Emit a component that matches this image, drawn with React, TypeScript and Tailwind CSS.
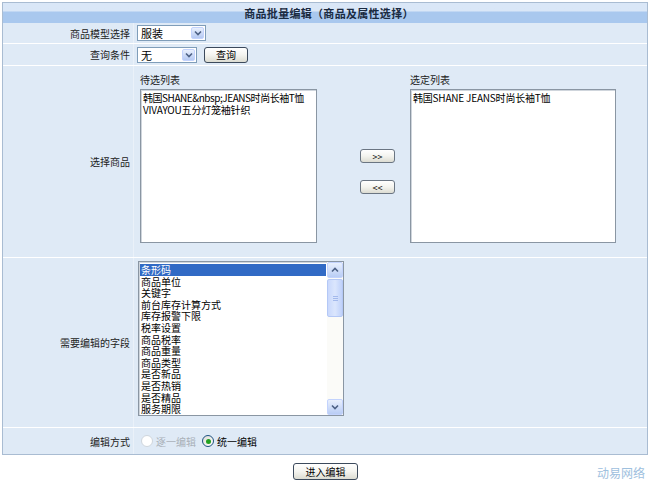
import React from "react";

const FONT = '"Noto Sans CJK SC", "Liberation Sans", sans-serif';

function Chevron({ up = false }: { up?: boolean }) {
  return (
    <svg width="8" height="6" viewBox="0 0 8 6" className={up ? "rotate-180" : ""}>
      <path d="M1 1.5 L4 4.5 L7 1.5" fill="none" stroke="#4d6185" strokeWidth="1.6" />
    </svg>
  );
}

function XpSelect({ value, width }: { value: string; width: string }) {
  return (
    <div className={`flex h-[16px] ${width} border border-[#7f9db9] bg-white`}>
      <span className="flex-1 pl-[3px] text-[11px] leading-[14px] text-black">{value}</span>
      <span className="m-[1px] flex w-[13px] items-center justify-center rounded-[2px] border border-[#c3d3fd] bg-gradient-to-b from-[#e9f0fd] to-[#b5c9f3]">
        <Chevron />
      </span>
    </div>
  );
}

function XpButton({ children, className }: { children: React.ReactNode; className: string }) {
  return (
    <button
      className={`flex items-center justify-center rounded-[3px] border border-[#3c4a5c] bg-gradient-to-b from-white via-[#f4f4ef] to-[#dcdcd2] text-black leading-none ${className}`}
    >
      {children}
    </button>
  );
}

function Row({
  label,
  className,
  labelClass = "items-center",
  children,
}: {
  label: string;
  className: string;
  labelClass?: string;
  children: React.ReactNode;
}) {
  return (
    <div className={`grid grid-cols-[131px_1fr] border-b border-white ${className}`}>
      <div className={`flex justify-end border-r border-[#eaf1f9] pr-[3px] ${labelClass}`}>
        <span>{label}</span>
      </div>
      <div className="flex">{children}</div>
    </div>
  );
}

const FIELDS = [
  "条形码",
  "商品单位",
  "关键字",
  "前台库存计算方式",
  "库存报警下限",
  "税率设置",
  "商品税率",
  "商品重量",
  "商品类型",
  "是否新品",
  "是否热销",
  "是否精品",
  "服务期限",
];

export default function App() {
  return (
    <div
      className="relative h-[483px] w-[650px] overflow-hidden bg-white text-[10px] text-[#222]"
      style={{ fontFamily: FONT }}
    >
      <div className="ml-[2px] mt-[2px] w-[646px] border border-[#a9bcd2] bg-[#dfeaf6]">
        {/* title bar */}
        <div className="flex h-[20px] items-center justify-center bg-gradient-to-b from-[#dae7f7] from-40% to-[#a9c8ee] to-45% pl-[8px] text-[11px] font-bold text-[#1a2a40]">
          <span className="tracking-[0.3px]">商品批量编辑（商品及属性选择）</span>
        </div>

        <Row label="商品模型选择" className="h-[21px]">
          <div className="flex items-center pl-[3px]">
            <XpSelect value="服装" width="w-[69px]" />
          </div>
        </Row>

        <Row label="查询条件" className="h-[22px]">
          <div className="flex items-center pl-[3px]">
            <XpSelect value="无" width="w-[60px]" />
            <XpButton className="ml-[7px] h-[16px] w-[44px] text-[10px]">查询</XpButton>
          </div>
        </Row>

        <Row label="选择商品" className="h-[192px]">
          <div className="flex pl-[6px] pt-[7px]">
            <div className="flex flex-col">
              <span className="h-[16px] leading-[14px]">待选列表</span>
              <div className="h-[154px] w-[177px] overflow-hidden whitespace-nowrap border border-[#8a96a3] bg-white px-[2px] pt-[2px] leading-[11.6px] text-black shadow-[inset_1px_1px_0_#cfd5dc]">
                <div className="tracking-[-0.45px]">韩国SHANE&amp;nbsp;JEANS时尚长袖T恤</div>
                <div className="tracking-[-0.2px]">VIVAYOU五分灯笼袖针织</div>
              </div>
            </div>
            <div className="ml-[43px] mr-[15px] flex flex-col pt-[76px]">
              <XpButton className="h-[14px] w-[35px] rounded-[2px] border-[#6a7582] text-[9px] text-[#333]">&gt;&gt;</XpButton>
              <XpButton className="mt-[17px] h-[14px] w-[35px] rounded-[2px] border-[#6a7582] text-[9px] text-[#333]">&lt;&lt;</XpButton>
            </div>
            <div className="flex flex-col">
              <span className="h-[16px] leading-[14px]">选定列表</span>
              <div className="h-[154px] w-[206px] overflow-hidden whitespace-nowrap border border-[#8a96a3] bg-white px-[2px] pt-[2px] leading-[11.6px] text-black shadow-[inset_1px_1px_0_#cfd5dc]">
                <div className="tracking-[-0.2px]">韩国SHANE JEANS时尚长袖T恤</div>
              </div>
            </div>
          </div>
        </Row>

        <Row label="需要编辑的字段" className="h-[170px]">
          <div className="flex pl-[4px] pt-[3px]">
            <div className="flex h-[155px] w-[206px] border border-[#8a96a3] bg-white shadow-[inset_1px_1px_0_#cfd5dc]">
              <div className="flex-1 px-[1px] pt-[2px] leading-[11.6px] text-black">
                {FIELDS.map((f, i) => (
                  <div key={f} className={i === 0 ? "bg-[#316ac5] pl-[1px] text-white" : "pl-[1px]"}>
                    {f}
                  </div>
                ))}
              </div>
              <div className="flex w-[16px] flex-col bg-[#fbfbf8]">
                <div className="flex h-[16px] items-center justify-center rounded-[2px] border border-[#c3d3fd] bg-gradient-to-b from-[#e9f0fd] to-[#b9cdf5]">
                  <Chevron up />
                </div>
                <div className="mt-[1px] flex h-[38px] items-center justify-center rounded-[2px] border border-[#b4c8f6] bg-gradient-to-r from-[#c9d8fc] via-[#dbe6fd] to-[#bfd1fa]">
                  <div className="flex flex-col gap-[1px]">
                    <span className="h-px w-[5px] bg-[#a3b9ec]" />
                    <span className="h-px w-[5px] bg-[#a3b9ec]" />
                    <span className="h-px w-[5px] bg-[#a3b9ec]" />
                  </div>
                </div>
                <div className="flex-1" />
                <div className="flex h-[16px] items-center justify-center rounded-[2px] border border-[#c3d3fd] bg-gradient-to-b from-[#e9f0fd] to-[#b9cdf5]">
                  <Chevron />
                </div>
              </div>
            </div>
          </div>
        </Row>

        <div className="grid h-[26px] grid-cols-[131px_1fr]">
          <div className="flex items-center justify-end border-r border-[#eaf1f9] pr-[3px]">
            <span>编辑方式</span>
          </div>
          <div className="flex items-center pl-[7px]">
            <span className="h-[12px] w-[12px] rounded-full border border-[#cfd6dd] bg-white" />
            <span className="ml-[3px] text-[#a9b0b8]">逐一编辑</span>
            <span className="ml-[6px] flex h-[12px] w-[12px] items-center justify-center rounded-full border border-[#1c5180] bg-gradient-to-br from-[#dcdcd6] to-white">
              <span className="h-[5px] w-[5px] rounded-full bg-[#21a121]" />
            </span>
            <span className="ml-[3px] text-black">统一编辑</span>
          </div>
        </div>
      </div>

      <div className="mt-[8px] flex justify-center pl-[1px]">
        <XpButton className="h-[17px] w-[65px] text-[10px]">进入编辑</XpButton>
      </div>

      <span className="absolute right-[5px] top-[467px] text-[12px] leading-none text-[#9ec0de]">动易网络</span>
    </div>
  );
}
